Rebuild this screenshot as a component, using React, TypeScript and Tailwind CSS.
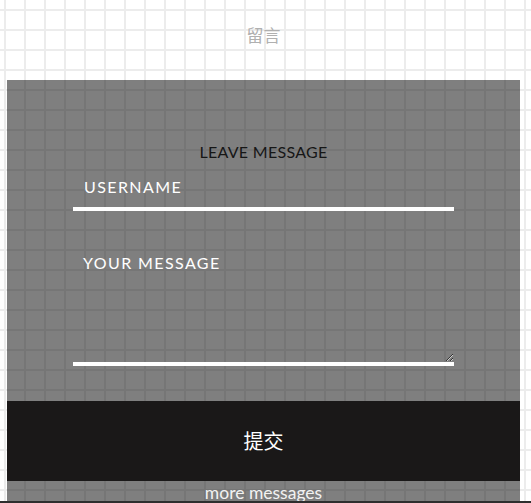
export default function App() {
  return (
    <div
      className="relative min-h-screen w-full overflow-hidden bg-white bg-[linear-gradient(to_right,#ececec_2px,transparent_2px),linear-gradient(to_bottom,#ececec_2px,transparent_2px)] bg-[size:20px_20px] bg-[position:4px_9px]"
      style={{ fontFamily: "Lato, 'Noto Sans CJK SC', sans-serif" }}
    >
      {/* Header */}
      <div className="h-[80px] pt-[24px] text-center">
        <h1 className="ml-[7px] w-[513px] text-[17px] leading-[22px] text-[#b0b0b0] font-['Noto_Sans_CJK_SC',sans-serif]">
          留言
        </h1>
      </div>

      {/* Message panel */}
      <div className="ml-[7px] w-[513px] bg-black/50 pt-[62px]">
        <h2 className="text-center text-[16px] leading-[20px] tracking-[0.3px] text-[#161616]">LEAVE MESSAGE</h2>

        <form className="mt-[10px] flex flex-col items-center">
          <input
            type="text"
            placeholder="USERNAME"
            className="box-border h-[39px] w-[381px] border-b-4 border-white bg-transparent pb-[6px] pl-[11px] text-[16px] tracking-[1.4px] text-white outline-none placeholder:text-white"
          />
          <textarea
            placeholder="YOUR MESSAGE"
            className="mt-[39px] box-border h-[116px] w-[381px] border-b-4 border-white bg-transparent pl-[10px] pt-[2px] text-[16px] leading-[22px] tracking-[1.4px] text-white outline-none placeholder:text-white"
          />
        </form>

        <button className="mt-[35px] block h-[80px] w-full bg-[#1a1818] text-[20px] text-white font-['Noto_Sans_CJK_SC',sans-serif]">
          提交
        </button>

        <div className="h-[22px] pt-[1px] text-center text-[17.5px] leading-[22px] text-[#f2f2f2]">more messages</div>
      </div>

      <div className="absolute bottom-0 left-0 h-[2px] w-full bg-[#2e2e2e]" />
    </div>
  );
}
